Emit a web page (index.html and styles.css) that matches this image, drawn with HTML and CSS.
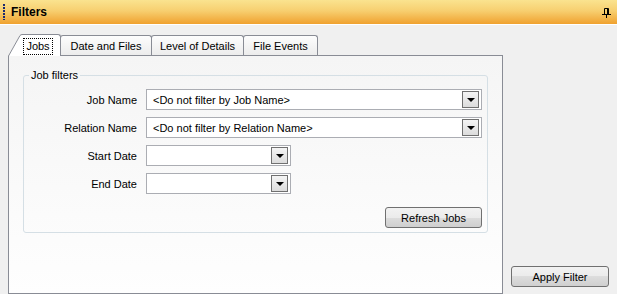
FILE: index.html
```html
<!DOCTYPE html>
<html>
<head>
    <link rel="stylesheet" href="styles.css">
    <title>Filters</title>
</head>
<body>
    <div class="header">
        <span class="grip"></span>
        <span class="title">Filters</span>
        <svg class="pin" width="9" height="10" viewBox="0 0 9 10">
            <path d="M2.5 0.5 H6.5 V6 M2.5 0.5 V6 M5.5 0.5 V6" stroke="#000" fill="none"/>
            <path d="M0 6.5 H9" stroke="#000"/>
            <path d="M4.5 6.5 V10" stroke="#000"/>
        </svg>
    </div>

    <div class="main">
        <div class="left">
            <div class="tabs">
                <svg class="slant" width="14" height="22" viewBox="0 0 14 22">
                    <path d="M0 22 L12 1.5 Q13 0.5 14 0.5 V22 Z" fill="#fff"/>
                    <path d="M0.5 22 L12 1.5 Q13 0.5 14 0.5" stroke="#898c95" fill="none"/>
                </svg>
                <div class="tab active"><span class="focus">Jobs</span></div>
                <div class="tab w91">Date and Files</div>
                <div class="tab w92">Level of Details</div>
                <div class="tab w74">File Events</div>
            </div>

            <div class="panel">
                <fieldset class="group">
                    <legend>Job filters</legend>
                    <div class="form">
                        <label>Job Name</label>
                        <div class="combo"><span>&lt;Do not filter by Job Name&gt;</span><span class="arrow"></span></div>

                        <label>Relation Name</label>
                        <div class="combo"><span>&lt;Do not filter by Relation Name&gt;</span><span class="arrow"></span></div>

                        <label>Start Date</label>
                        <div class="combo short"><span></span><span class="arrow"></span></div>

                        <label>End Date</label>
                        <div class="combo short"><span></span><span class="arrow"></span></div>
                    </div>
                    <div class="actions">
                        <button class="btn">Refresh Jobs</button>
                    </div>
                </fieldset>
            </div>
        </div>

        <div class="right">
            <button class="btn apply">Apply Filter</button>
        </div>
    </div>
</body>
</html>
```

FILE: styles.css
```css
body{
    margin: 0;
    width: 617px;
    height: 294px;
    overflow: hidden;
    background-color: #f0f0f0;
    font-family: "Liberation Sans", Arial, sans-serif;
    font-size: 11px;
    color: #000;
}

.header{
    height: 24px;
    border-bottom: 1px solid #fff;
    background: linear-gradient(#fae38f, #f7cf70 45%, #f0a12f);
    display: flex;
    align-items: center;
}

.grip{
    width: 2px;
    height: 16px;
    margin-left: 3px;
    background: repeating-linear-gradient(#1c2a6e 0 2px, transparent 2px 3px);
}

.title{
    margin-left: 6px;
    font-weight: bold;
    font-size: 12px;
}

.pin{
    margin-left: auto;
    margin-right: 6px;
    margin-top: 2px;
}

.main{
    display: flex;
    padding: 9px 8px 0 8px;
    height: 260px;
}

.left{
    width: 495px;
    display: flex;
    flex-direction: column;
}

.tabs{
    display: flex;
    align-items: flex-end;
    height: 21px;
}

.slant{
    display: block;
    flex: none;
    position: relative;
    z-index: 2;
    margin-bottom: -1px;
}

.tab{
    height: 18px;
    border: 1px solid #898c95;
    border-bottom: none;
    border-radius: 3px 3px 0 0;
    background: linear-gradient(#fdfdfd, #ececec);
    display: flex;
    align-items: center;
    justify-content: center;
    box-sizing: content-box;
    margin-left: -1px;
    padding-top: 1px;
}

.tab.active{
    width: 38px;
    height: 21px;
    border-left: none;
    margin-left: 0;
    margin-bottom: -1px;
    padding-top: 0;
    background: #fff;
    position: relative;
    z-index: 2;
    border-radius: 0 3px 0 0;
}

.focus{
    border: 1px dotted #000;
    padding: 1px 2px 2px 2px;
    margin-left: -6px;
    margin-top: 2px;
}

.w91{ width: 90px; }
.w92{ width: 91px; }
.w74{ width: 73px; }

.panel{
    flex: 1;
    border: 1px solid #898c95;
    background: linear-gradient(#f5f5f5, #fefefe);
    padding: 13px 14px 57px 14px;
    position: relative;
    z-index: 1;
}

.group{
    margin: 0;
    border: 1px solid #d5dfe5;
    border-radius: 3px;
    padding: 8px 5px 4px 0;
}

.group legend{
    padding: 0 2px;
    margin-left: 5px;
}

.form{
    display: grid;
    grid-template-columns: 113px 1fr;
    column-gap: 9px;
    row-gap: 7px;
    align-items: center;
}

.form label{
    text-align: right;
}

.combo{
    height: 19px;
    border: 1px solid #abadb3;
    background: #fff;
    display: flex;
    align-items: center;
    justify-content: space-between;
    padding-left: 6px;
    padding-right: 2px;
}

.combo.short{
    width: 135px;
}

.arrow{
    width: 15px;
    height: 15px;
    border: 1px solid #707070;
    background: linear-gradient(#f4f4f4, #dcdcdc);
    position: relative;
}

.arrow::after{
    content: "";
    position: absolute;
    left: 4px;
    top: 6px;
    border-left: 4px solid transparent;
    border-right: 4px solid transparent;
    border-top: 4px solid #000;
}

.actions{
    display: flex;
    justify-content: flex-end;
    margin-top: 13px;
}

.btn{
    font-family: "Liberation Sans", Arial, sans-serif;
    font-size: 11px;
    color: #000;
    width: 97px;
    height: 21px;
    border: 1px solid #707070;
    border-radius: 3px;
    background: linear-gradient(#f2f2f2 0, #ebebeb 50%, #dddddd 50%, #cfcfcf 100%);
    padding: 0;
}

.right{
    flex: 1;
    display: flex;
    align-items: flex-end;
    justify-content: flex-end;
    padding-bottom: 7px;
}

.apply{
    width: 98px;
}
```
